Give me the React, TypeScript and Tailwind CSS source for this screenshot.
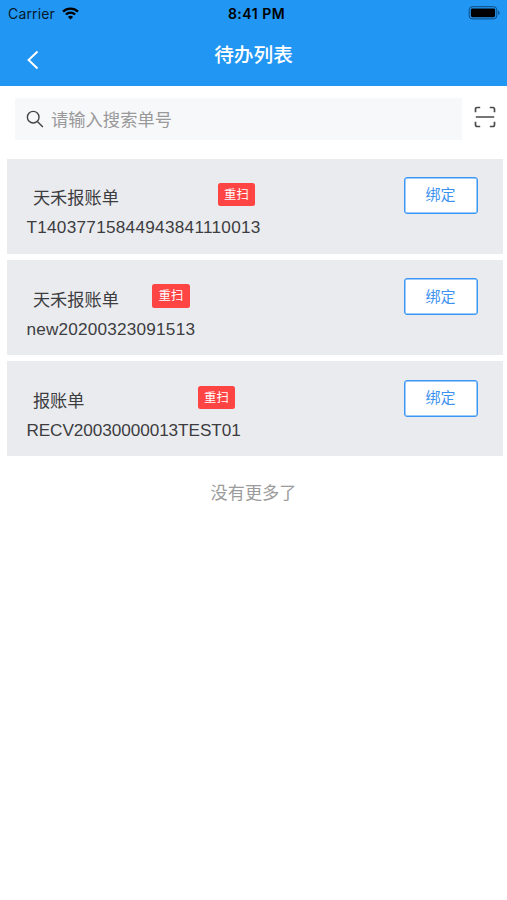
import React from "react";

/* ---------------------------------- DATA ---------------------------------- */
type Todo = { title: string; code: string; tracking: string };

const todos: Todo[] = [
  { title: "天禾报账单", code: "T14037715844943841110013", tracking: "tracking-[0.27px]" },
  { title: "天禾报账单", code: "new20200323091513", tracking: "tracking-[0.2px]" },
  { title: "报账单", code: "RECV20030000013TEST01", tracking: "tracking-[-0.08px]" },
];

/* --------------------------------- PAGE ----------------------------------- */
export default function App() {
  return (
    <main className="h-[900px] w-[507px] overflow-hidden bg-white font-['Liberation_Sans','Noto_Sans_CJK_SC',sans-serif] text-[#3d3d3f]">
      <header className="h-[85.6px] bg-[#2196f3]">
        <StatusBar />
        <NavBar />
      </header>

      <SearchBar />

      <section className="mt-[18.6px] ml-[7px] flex w-[495.6px] flex-col gap-[6.4px]">
        {todos.map((todo) => (
          <TodoCard key={todo.code} todo={todo} />
        ))}
      </section>

      <p className="mt-[25px] text-center text-[17.2px] leading-6 text-[#9b9b9b]">没有更多了</p>
    </main>
  );
}

/* ------------------------------ STATUS BAR -------------------------------- */
function StatusBar() {
  return (
    <div className="grid h-[27px] grid-cols-3 items-center pr-[6px] pl-[8px] font-[Inter,sans-serif] text-[#06192b]">
      <div className="flex items-center gap-[7px]">
        <span className="text-[14px] tracking-[0.15px]">Carrier</span>
        <svg width="17" height="13" viewBox="0 0 17 13" fill="none" stroke="#000" strokeWidth="2.3">
          <path d="M1 4.6a10.7 10.7 0 0 1 15 0" />
          <path d="M3.9 7.5a6.6 6.6 0 0 1 9.2 0" />
          <path d="M8.5 12.6 5.9 10a3.7 3.7 0 0 1 5.2 0z" fill="#000" stroke="none" />
        </svg>
      </div>
      <span className="pl-[4px] text-center text-[14px] font-semibold tracking-[0.5px] text-black">8:41 PM</span>
      <svg className="-mt-[1px] justify-self-end" width="33" height="14" viewBox="0 0 33 14">
        <rect x="1.2" y="0.7" width="27.6" height="12.2" rx="3.2" fill="none" stroke="#0d4b80" strokeWidth="1" />
        <rect x="2.9" y="2.4" width="24.2" height="8.8" rx="1.4" fill="#000" />
        <path d="M30.2 4.6c1.9.8 1.9 3.6 0 4.4z" fill="#0d4b80" />
      </svg>
    </div>
  );
}

/* -------------------------------- NAVBAR ---------------------------------- */
function NavBar() {
  return (
    <nav className="grid h-[54px] grid-cols-[60px_1fr_60px] items-center text-white">
      <button className="mt-[11px] ml-[27px] w-3" aria-label="返回">
        <svg width="12" height="20" viewBox="0 0 12 20" fill="none" stroke="currentColor" strokeWidth="2">
          <path d="M10.5 1.5 1.6 10l8.9 8.5" />
        </svg>
      </button>
      <h1 className="mt-px text-center text-[19.7px] font-medium leading-7">待办列表</h1>
    </nav>
  );
}

/* ------------------------------ SEARCH BAR -------------------------------- */
function SearchBar() {
  return (
    <div className="mt-[12.4px] flex h-[42px] pl-[15px]">
      <div className="flex w-[447px] items-center bg-[#f7f8fa] pl-[11px]">
        <svg className="mt-px" width="18" height="18" viewBox="0 0 18 18" fill="none" stroke="#444" strokeWidth="1.4">
          <circle cx="7.2" cy="7.2" r="5.8" />
          <path d="m11.4 11.4 5.5 5.5" />
        </svg>
        <span className="mt-[3px] ml-[7px] text-[17.3px] text-[#999]">请输入搜索单号</span>
      </div>
      <button className="mt-[8px] ml-[12px] h-[22px]" aria-label="扫一扫">
        <svg width="22" height="22" viewBox="0 0 22 22" fill="none" stroke="#4a4a4a" strokeWidth="1.7">
          <path d="M1.5 6.2V3.2q0-1.7 1.7-1.7h3M15.8 1.5h3q1.7 0 1.7 1.7v3M20.5 15.8v3q0 1.7-1.7 1.7h-3M6.2 20.5h-3q-1.7 0-1.7-1.7v-3M1.8 11h18.4" />
        </svg>
      </button>
    </div>
  );
}

/* --------------------------------- CARD ----------------------------------- */
function TodoCard({ todo }: { todo: Todo }) {
  return (
    <article className="flex h-[95px] items-start justify-between bg-[#e9ebef] pr-[25px] pl-[19.4px]">
      <div className="flex flex-col pt-[24.4px]">
        <div className="flex items-start justify-between pr-[5.5px] pl-[6.5px]">
          <h2 className="mt-[3.4px] text-[17.2px] leading-6">{todo.title}</h2>
          <span className="flex h-[23.5px] w-[37.5px] items-center justify-center rounded-[2.5px] bg-[#ff4444] pt-px text-[12.3px] text-white">
            重扫
          </span>
        </div>
        <p className={`mt-[5px] text-[17.2px] leading-6 ${todo.tracking}`}>{todo.code}</p>
      </div>
      <button className="mt-[18.3px] h-[37px] w-[74px] rounded-[3px] border border-[#3b96f5] bg-white text-[15px] text-[#3b92f0] shadow-[inset_0_0_0_0.5px_#3b96f5]">
        绑定
      </button>
    </article>
  );
}
